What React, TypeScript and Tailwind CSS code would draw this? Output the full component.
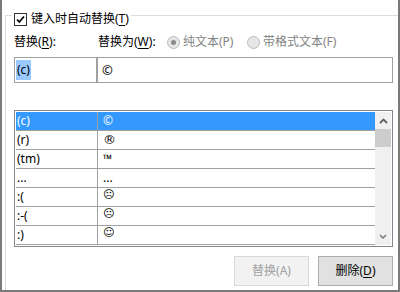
import React from "react";

const rows: { k: string; v: string; sym?: boolean; big?: boolean; sel?: boolean }[] = [
  { k: "(c)", v: "©", sel: true },
  { k: "(r)", v: "®", big: true },
  { k: "(tm)", v: "™" },
  { k: "...", v: "..." },
  { k: ":(", v: "☹", sym: true },
  { k: ":-(", v: "☹", sym: true },
  { k: ":)", v: "☺", sym: true },
];

function Radio({ checked }: { checked?: boolean }) {
  return (
    <div className="w-[13px] h-[13px] rounded-full border border-[#bcbcbc] bg-[#e6e6e6] flex items-center justify-center shrink-0">
      {checked && <div className="w-[5px] h-[5px] rounded-full bg-[#8a8a8a]" />}
    </div>
  );
}

export default function App() {
  return (
    <div className="w-[400px] h-[292px] bg-white overflow-hidden border-l-2 border-r-2 border-b-2 border-[#7a7a7a] text-[12px] text-black font-['Noto_Sans','Noto_Sans_CJK_SC',sans-serif]">
      <div className="ml-[3px] mt-[15px] h-[300px] border-t border-l border-[#dcdcdc] flex flex-col items-start">
        {/* legend */}
        <div className="-mt-[4px] ml-[6px] h-[14px] px-[2px] bg-white flex items-center">
          <div className="w-[13px] h-[13px] border border-[#333333] bg-white flex items-center justify-center shrink-0">
            <svg width="11" height="11" viewBox="0 0 11 11">
              <path d="M2 5.5 L4.3 8 L9 2.5" fill="none" stroke="#000" strokeWidth="1.7" />
            </svg>
          </div>
          <span className="ml-[4px] leading-[14px] whitespace-nowrap">
            键入时自动替换(<span className="underline underline-offset-2">T</span>)
          </span>
        </div>

        {/* labels */}
        <div className="mt-[8px] ml-[8px] h-[16px] flex items-center leading-[16px] whitespace-nowrap">
          <span className="w-[84px]">
            替换(<span className="underline underline-offset-2">R</span>):
          </span>
          <span className="w-[69px]">
            替换为(<span className="underline underline-offset-2">W</span>):
          </span>
          <Radio checked />
          <span className="ml-[3px] w-[64px] text-[#838383]">纯文本(P)</span>
          <Radio />
          <span className="ml-[3px] text-[#838383]">带格式文本(F)</span>
        </div>

        {/* inputs */}
        <div className="mt-[7px] ml-[8px] h-[26px] flex">
          <div className="w-[83px] h-[26px] border border-[#a0a0a0] pt-[2px] pl-[1px]">
            <span className="inline-block bg-[#99c9ff] leading-[20px] px-[1px]">(c)</span>
          </div>
          <div className="w-[296px] h-[26px] border border-[#a0a0a0] pt-[2px] pl-[4px] leading-[20px] text-[13px]">©</div>
        </div>

        {/* list */}
        <div className="mt-[27px] ml-[8px] w-[379px] h-[137px] border border-[#828790] p-[1px] flex">
          <div className="w-[359px] flex flex-col">
            {rows.map((r, i) => (
              <div
                key={i}
                className={
                  "h-[19px] border-b border-[#a0a0a0] flex " +
                  (r.sel ? "bg-[#3399ff] text-white" : "")
                }
              >
                <div className="w-[82px] border-r border-[#a0a0a0] pl-[1px] leading-[18px]">{r.k}</div>
                {r.sym ? (
                  <div className="flex-1 pl-[5px] pt-[1px] text-[11px] leading-[12px] font-['DejaVu_Sans',sans-serif]">
                    {r.v}
                  </div>
                ) : r.big ? (
                  <div className="flex-1 pl-[5px] leading-[18px] text-[13px] font-['DejaVu_Sans',sans-serif]">{r.v}</div>
                ) : (
                  <div className="flex-1 pl-[5px] leading-[18px]">{r.v}</div>
                )}
              </div>
            ))}
          </div>
          <div className="w-[16px] bg-[#f0f0f0] flex flex-col">
            <div className="h-[17px] flex items-center justify-center">
              <svg width="9" height="6" viewBox="0 0 9 6">
                <path d="M1 5 L4.5 1.5 L8 5" fill="none" stroke="#606060" strokeWidth="1.8" />
              </svg>
            </div>
            <div className="h-[18px] bg-[#cdcdcd]" />
            <div className="flex-1" />
            <div className="h-[17px] flex items-center justify-center">
              <svg width="8" height="5" viewBox="0 0 8 5">
                <path d="M1 1 L4 4 L7 1" fill="none" stroke="#7a7a7a" strokeWidth="1.5" />
              </svg>
            </div>
          </div>
        </div>

        {/* buttons */}
        <div className="mt-[9px] ml-[228px] flex gap-[9px]">
          <div className="w-[75px] h-[30px] border border-[#d9d9d9] bg-[#f2f2f2] text-[#a0a0a0] flex items-center justify-center leading-[16px]">
            替换(A)
          </div>
          <div className="w-[75px] h-[30px] border border-[#adadad] bg-[#e1e1e1] flex items-center justify-center leading-[16px]">
            删除(<span className="underline underline-offset-2">D</span>)
          </div>
        </div>
      </div>
    </div>
  );
}
